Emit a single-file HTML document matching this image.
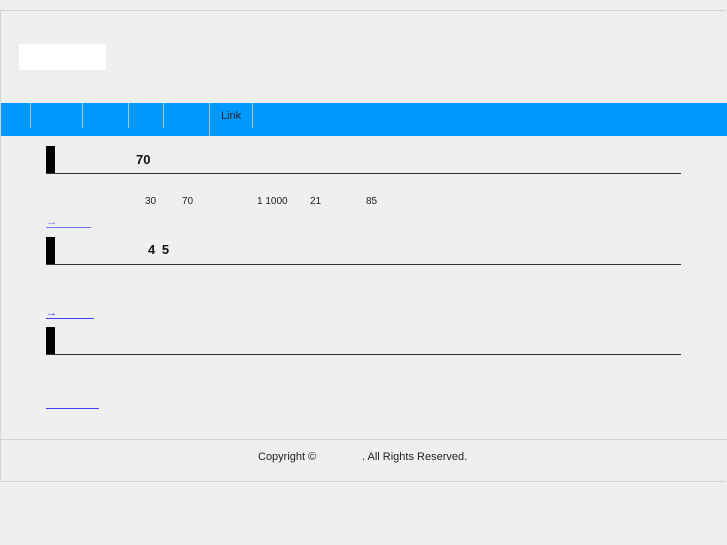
<!DOCTYPE html>
<html><head><meta charset="utf-8"><style>
body{margin:0;width:727px;height:545px;background:#efefef;font-family:"Liberation Sans","Noto Sans CJK JP",sans-serif;position:relative;overflow:hidden}
.a{position:absolute}
.wrap{left:0;top:10px;width:725px;height:470px;border:1px solid #d4d4d4;border-right:none}
.logo{left:19px;top:44px;width:87px;height:26px;background:#fff}
.nav{left:1px;top:103px;width:726px;height:33px;background:#0099ff}
.sep{top:103px;width:1px;height:25px;background:#a9c4d8}
.bar{left:46px;width:9px;height:27px;background:#000}
.line{left:46px;width:635px;height:1px;background:#333}
.t{font-size:11px;color:#222}
.h{font-size:13px;font-weight:bold;color:#111}
.lk{height:1px;background:#4040ff}
.ar{font-size:11px;color:#3030ff}
</style></head><body>
<div class="a wrap"></div>
<div class="a logo"></div>
<div class="a nav"></div>
<div class="a sep" style="left:30px"></div>
<div class="a sep" style="left:82px"></div>
<div class="a sep" style="left:128px"></div>
<div class="a sep" style="left:163px"></div>
<div class="a sep" style="left:209px;height:33px"></div>
<div class="a sep" style="left:252px"></div>
<div class="a t" style="left:221px;top:110px">Link</div>

<div class="a bar" style="top:146px"></div>
<div class="a line" style="top:173px"></div>
<div class="a h" style="left:136px;top:152px">70</div>
<div class="a t" style="left:145px;top:196px;font-size:10px">30</div>
<div class="a t" style="left:182px;top:196px;font-size:10px">70</div>
<div class="a t" style="left:257px;top:196px;font-size:10px">1 1000</div>
<div class="a t" style="left:310px;top:196px;font-size:10px">21</div>
<div class="a t" style="left:366px;top:196px;font-size:10px">85</div>
<div class="a ar" style="left:46px;top:216px;color:#6b6bff">→</div>
<div class="a lk" style="left:46px;top:227px;width:45px;background:#7777ff"></div>

<div class="a bar" style="top:237px"></div>
<div class="a line" style="top:264px"></div>
<div class="a h" style="left:148px;top:242px;word-spacing:3px">4 5</div>
<div class="a ar" style="left:46px;top:307px">→</div>
<div class="a lk" style="left:46px;top:318px;width:48px"></div>

<div class="a bar" style="top:327px"></div>
<div class="a line" style="top:354px"></div>
<div class="a lk" style="left:46px;top:408px;width:53px"></div>

<div class="a" style="left:1px;top:439px;width:726px;height:1px;background:#d4d4d4"></div>
<div class="a t" style="left:258px;top:451px;font-size:11px">Copyright ©</div>
<div class="a t" style="left:362px;top:451px;font-size:11px">. All Rights Reserved.</div>
</body></html>
